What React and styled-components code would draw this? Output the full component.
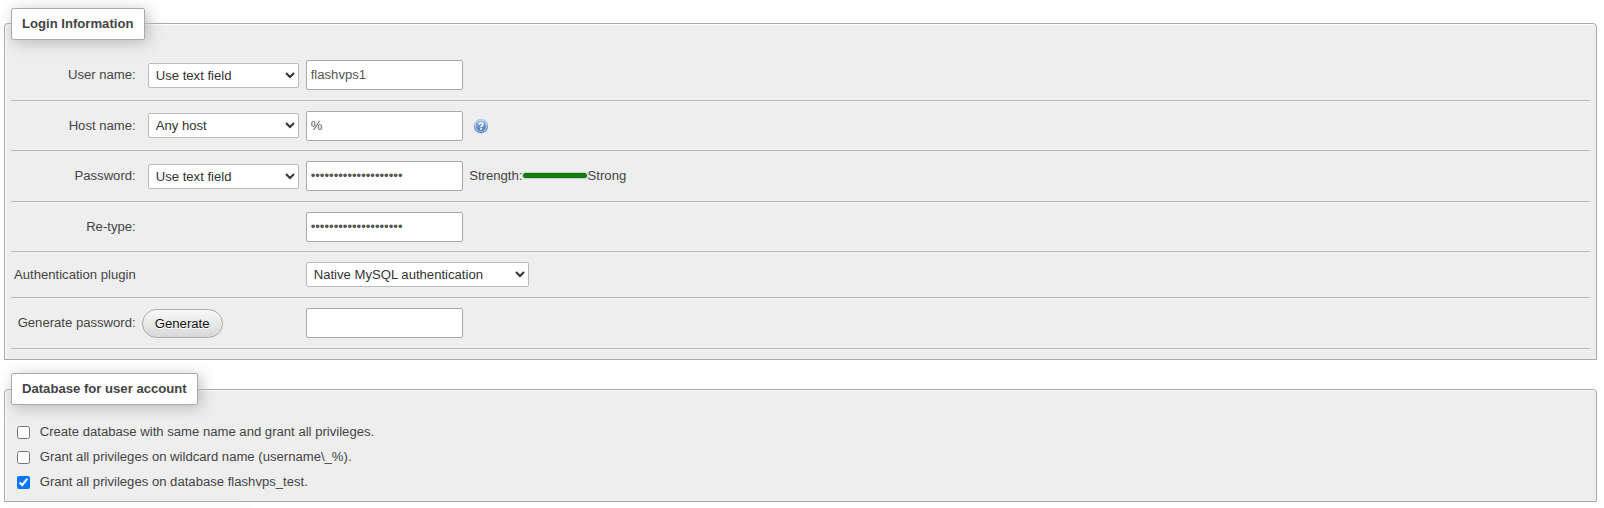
import React from 'react';
import styled, { createGlobalStyle } from 'styled-components';

const GlobalStyle = createGlobalStyle`
  * { box-sizing: border-box; }
  html, body { margin: 0; padding: 0; background: #fff; }
  html { overflow: hidden; }
  body {
    color: #444;
    font-family: "Liberation Sans", Arial, sans-serif;
    font-size: 13.12px;
    line-height: 15px;
  }
`;

const Page = styled.main`
  display: flex;
  flex-direction: column;
  gap: 13px;
  height: 508px;
  padding: 7.5px 7px 0 4px;
  overflow: hidden;
`;

const Fieldset = styled.fieldset`
  flex: none;
  margin: 0;
  min-width: 0;
  padding: ${(p) => p.$pad};
  border: 1px solid #aaa;
  border-radius: 4px 4px 0 0;
  background: #eee;
  box-shadow: 1px 1px 2px #fff inset;
`;

const Legend = styled.legend`
  width: ${(p) => p.$width}px;
  height: 32px;
  margin-left: ${(p) => p.$shift ?? 0}px;
  padding: 7.2px 10px;
  border: 1px solid #aaa;
  border-radius: 2px;
  background: #fff;
  box-shadow: 3px 3px 15px #bbb;
  color: #444;
  font-weight: bold;
  white-space: nowrap;
`;

const Row = styled.div`
  display: flex;
  align-items: flex-start;
  height: ${(p) => p.$height}px;
  padding-top: 10px;
  border-bottom: 1px solid #bbb;
`;

const Label = styled.label`
  width: 124.7px;
  padding-top: ${(p) => p.$top ?? 7}px;
  text-align: right;
  white-space: nowrap;
`;

const Options = styled.div`
  display: flex;
  width: 170px;
  padding: ${(p) => p.$top ?? 3}px 0 0 ${(p) => p.$left ?? 12}px;
`;

const Select = styled.select`
  width: ${(p) => p.$width}px;
  height: 25px;
  margin: 0;
  padding: 3px;
  border: 1px solid #bbb;
  border-radius: 2px;
  background: #fff;
  color: #333;
  font-family: inherit;
  font-size: 13.12px;
`;

const Input = styled.input`
  width: 157px;
  height: 30px;
  margin: 0;
  padding: 4px 4px 6px;
  border: 1px solid #aaa;
  border-radius: 2px;
  background: #fff;
  color: #555;
  font-family: inherit;
  font-size: 13.12px;
`;

const Button = styled.button`
  width: 81px;
  height: 29px;
  margin: 0;
  padding: 0;
  border: 1px solid #aaa;
  border-radius: 15px;
  background: linear-gradient(#f8f8f8, #d8d8d8);
  color: #111;
  font-family: inherit;
  font-size: 13.12px;
  text-shadow: 0 1px 0 #fff;
`;

const Strength = styled.div`
  display: flex;
  padding: 7px 0 0 6.5px;
`;

const Meter = styled.meter`
  width: 65.6px;
  height: 13px;
  margin: 1px 0 0 -0.4px;
`;

const Help = styled.svg`
  width: 16px;
  height: 16px;
  margin: 7px 0 0 10.3px;
`;

const CheckRow = styled.label`
  display: flex;
  align-items: flex-start;
  height: 25px;
`;

const Check = styled.input`
  width: 13px;
  height: 13px;
  margin: 2px 9.7px 0 0;
`;

const NextLegend = styled.div`
  flex: none;
  width: 240px;
  height: 32px;
  margin-left: 7px;
  border: 1px solid #aaa;
  border-radius: 2px;
  background: #fff;
  box-shadow: 3px 3px 15px #bbb;
`;

const HelpIcon = () => (
  <Help viewBox="0 0 16 16" aria-label="Help">
    <defs>
      <linearGradient id="ring" x1="0" y1="0" x2="0" y2="1">
        <stop offset="0" stopColor="#b9d0ec" />
        <stop offset="1" stopColor="#3f6fb2" />
      </linearGradient>
      <linearGradient id="disc" x1="0" y1="0" x2="0" y2="1">
        <stop offset="0" stopColor="#8fb1db" />
        <stop offset="1" stopColor="#4c7ebd" />
      </linearGradient>
    </defs>
    <circle cx="8" cy="8" r="7.2" fill="url(#ring)" />
    <circle cx="8" cy="8" r="6.1" fill="#cfdff2" />
    <circle cx="8" cy="8" r="5.3" fill="url(#disc)" />
    <path d="M6.2 6.5C6.2 4.2 9.9 4.3 9.8 6.4C9.7 7.7 8 7.5 8 9.2" fill="none" stroke="#fff" strokeWidth="1.6" />
    <rect x="7.1" y="10.2" width="1.8" height="1.6" fill="#fff" />
  </Help>
);

const checks = [
  ['Create database with same name and grant all privileges.', false],
  ['Grant all privileges on wildcard name (username\\_%).', false],
  ['Grant all privileges on database flashvps_test.', true],
];

const secret = 'x'.repeat(20);

export default function App() {
  return (
    <>
      <GlobalStyle />
      <Page>
        <Fieldset $pad="10.5px 6px 10px">
          <Legend $width={134}>Login Information</Legend>
          <Row $height={51}>
            <Label>User name:</Label>
            <Options><Select $width={151}><option>Use text field</option></Select></Options>
            <Input defaultValue="flashvps1" />
          </Row>
          <Row $height={50}>
            <Label>Host name:</Label>
            <Options $top={2}><Select $width={151}><option>Any host</option></Select></Options>
            <Input defaultValue="%" />
            <HelpIcon />
          </Row>
          <Row $height={51}>
            <Label>Password:</Label>
            <Options><Select $width={151}><option>Use text field</option></Select></Options>
            <Input type="password" defaultValue={secret} />
            <Strength>
              <span>Strength:</span>
              <Meter min={0} max={4} value={4} />
              <span>Strong</span>
            </Strength>
          </Row>
          <Row $height={50}>
            <Label>Re-type:</Label>
            <Options />
            <Input type="password" defaultValue={secret} />
          </Row>
          <Row $height={46}>
            <Label $top={5}>Authentication plugin</Label>
            <Options />
            <Select $width={223}><option>Native MySQL authentication</option></Select>
          </Row>
          <Row $height={51}>
            <Label>Generate password:</Label>
            <Options $top={1} $left={6}><Button type="button">Generate</Button></Options>
            <Input />
          </Row>
        </Fieldset>
        <Fieldset $pad="19px 12px 2px">
          <Legend $width={187} $shift={-6}>Database for user account</Legend>
          {checks.map(([text, on]) => (
            <CheckRow key={text}>
              <Check type="checkbox" defaultChecked={on} />
              <span>{text}</span>
            </CheckRow>
          ))}
        </Fieldset>
        <NextLegend />
      </Page>
    </>
  );
}
